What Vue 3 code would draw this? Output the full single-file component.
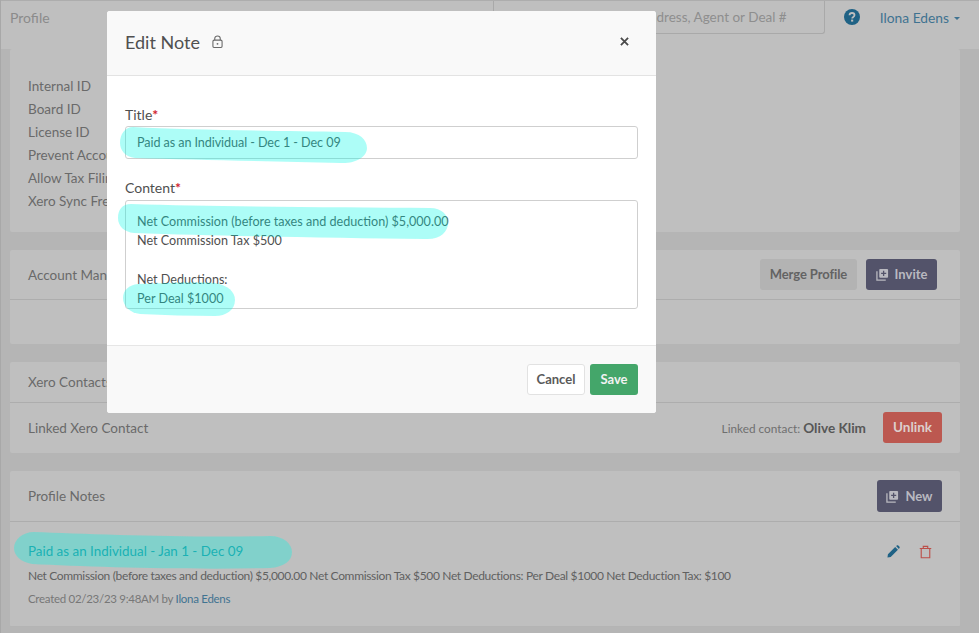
<script setup>
const rows = ['Internal ID', 'Board ID', 'License ID', 'Prevent Account', 'Allow Tax Filing', 'Xero Sync Free']
const contentLines = [
  'Net Commission (before taxes and deduction) $5,000.00',
  'Net Commission Tax $500',
  '\u00a0',
  'Net Deductions:',
  'Per Deal $1000'
]
const blobs = [
  'M133 127C190 130 280 131 345 132C360 132 367 140 367 148C367 157 355 164 340 163C270 161 190 160 135 158C125 157 120 150 120 143C120 134 125 127 133 127Z',
  'M131 204C220 207 340 207 430 208C442 208 448 215 448 223C448 232 440 240 425 239C330 238 220 236 134 233C124 232 118 226 118 218C118 210 122 204 131 204Z',
  'M138 284C165 283 195 282 215 283C228 285 235 292 235 300C235 310 226 316 215 316C190 316 165 315 140 314C130 313 123 306 123 298C123 290 129 285 138 284Z',
  'M34 532C90 534 190 538 270 536C284 536 292 544 292 552C292 561 284 567 270 568C190 570 90 567 32 564C21 562 14 556 14 548C14 540 22 532 34 532Z'
]
</script>

<template>
  <div class="page">
    <header class="topbar">
      <span class="crumb">Profile</span>
      <div class="search">Search by Name, Address, Agent or Deal #</div>
      <svg class="help" viewBox="0 0 16 16" width="16" height="16">
        <circle cx="8" cy="8" r="8" fill="#1f6285" />
        <path d="M5.5 6.2C5.6 4.8 6.6 4 8 4C9.5 4 10.5 4.9 10.5 6.1C10.5 7.1 10 7.6 9.2 8.1C8.5 8.5 8.2 8.8 8.2 9.6" fill="none" stroke="#bfbfbf" stroke-width="1.8" />
        <rect x="7.1" y="10.6" width="2.1" height="2" fill="#bfbfbf" />
      </svg>
      <span class="user">Ilona Edens<i class="caret"></i></span>
    </header>

    <main class="main">
      <section class="card first">
        <div v-for="r in rows" :key="r" class="row">{{ r }}</div>
      </section>

      <section class="card">
        <div class="card-head h50 pad23">
          <span>Account Manager</span>
          <div class="actions">
            <button class="btn merge">Merge Profile</button>
            <button class="btn dark">
              <svg viewBox="0 0 14 14" width="13" height="13" fill="none" stroke="currentColor" stroke-width="1.4">
                <path d="M1 3.5V13H10.5" />
                <rect x="3.5" y="1" width="9.5" height="9.5" rx="1" fill="currentColor" stroke="none" />
                <path d="M8.2 3V8.5M5.5 5.7H11" stroke="#53536a" />
              </svg>
              Invite
            </button>
          </div>
        </div>
        <div class="blank"></div>
      </section>

      <section class="card">
        <div class="card-head h41"><span>Xero Contacts</span></div>
        <div class="linked">
          <span>Linked Xero Contact</span>
          <div class="actions g17">
            <span class="contact">Linked contact: <b>Olive Klim</b></span>
            <button class="btn red">Unlink</button>
          </div>
        </div>
      </section>

      <section class="card">
        <div class="card-head h51">
          <span>Profile Notes</span>
          <button class="btn dark tall">
            <svg viewBox="0 0 14 14" width="13" height="13" fill="none" stroke="currentColor" stroke-width="1.4">
              <path d="M1 3.5V13H10.5" />
              <rect x="3.5" y="1" width="9.5" height="9.5" rx="1" fill="currentColor" stroke="none" />
              <path d="M8.2 3V8.5M5.5 5.7H11" stroke="#53536a" />
            </svg>
            New
          </button>
        </div>
        <div class="note">
          <div class="note-text">
            <a class="note-title">Paid as an Individual - Jan 1 - Dec 09</a>
            <p class="note-body">Net Commission (before taxes and deduction) $5,000.00 Net Commission Tax $500 Net Deductions: Per Deal $1000 Net Deduction Tax: $100</p>
            <p class="note-meta">Created 02/23/23 9:48AM by <a class="link">Ilona Edens</a></p>
          </div>
          <div class="note-icons">
            <svg viewBox="0 0 14 14" width="13" height="13" fill="#1f6285">
              <path d="M0.5 13.5L1 10L8.8 2.2L11.8 5.2L4 13ZM9.8 1.2L11 0.4C11.4 0.2 11.8 0.2 12.1 0.5L13.5 1.9C13.8 2.2 13.8 2.6 13.6 3L12.8 4.2Z" />
            </svg>
            <svg viewBox="0 0 14 14" width="13" height="14" fill="none" stroke="#bc4f49" stroke-width="1.2">
              <path d="M0.8 3.2H13.2M4.6 3V1H9.4V3M2.4 3.2V13.2H11.6V3.2" />
            </svg>
          </div>
        </div>
      </section>
    </main>

    <div class="modal">
      <div class="modal-head">
        <h2>Edit Note</h2>
        <svg class="lock" viewBox="0 0 12 14" width="11" height="13" fill="none" stroke="#6a6a6a" stroke-width="1.2">
          <rect x="1" y="5.5" width="10" height="8" rx="1.4" />
          <path d="M3 5.5V3.6C3 2 4.3 1 6 1C7.7 1 9 2 9 3.6V5.5" />
          <circle cx="6" cy="9.5" r="1" fill="#6a6a6a" stroke="none" />
        </svg>
        <svg class="close" viewBox="0 0 10 10" width="9" height="9" stroke="#4a4a4a" stroke-width="2">
          <path d="M1 1L9 9M9 1L1 9" />
        </svg>
      </div>
      <div class="modal-body">
        <label class="label">Title<em>*</em></label>
        <div class="input">Paid as an Individual - Dec 1 - Dec 09</div>
        <label class="label second">Content<em>*</em></label>
        <div class="area">
          <div v-for="(l, i) in contentLines" :key="i">{{ l }}</div>
        </div>
      </div>
      <div class="modal-foot">
        <button class="btn cancel">Cancel</button>
        <button class="btn save">Save</button>
      </div>
    </div>

    <svg class="marks" viewBox="0 0 979 633" width="979" height="633">
      <path v-for="(d, i) in blobs" :key="i" :d="d" fill="rgba(0,250,230,0.32)" />
    </svg>
  </div>
</template>

<style scoped>
.page {
  position: relative;
  width: 979px;
  height: 633px;
  box-sizing: border-box;
  overflow: hidden;
  background: #b5b5b5;
  border-left: 1px solid #a8a8a8;
  font-family: Lato, "Noto Sans", sans-serif;
  font-size: 13.5px;
  color: #5f5f5f;
}
.topbar {
  height: 49px;
  box-sizing: border-box;
  background: #bfbfbf;
  border-top: 1px solid #adadad;
  display: flex;
  align-items: flex-start;
  padding-right: 19px;
}
.crumb { margin: 8px 0 0 9px; color: #8b8b8b; line-height: 18px; font-size: 14px; }
.search {
  margin-left: auto;
  margin-right: 19px;
  width: 332px;
  height: 33px;
  box-sizing: border-box;
  border: 1px solid #a9a9a9;
  border-top: 0;
  border-radius: 0 0 3px 3px;
  line-height: 33px;
  color: #8e8e8e;
  text-align: right;
  padding-right: 37px;
  white-space: nowrap;
}
.help { margin: 8px 0 0 0; flex: none; }
.user { margin: 8px 0 0 20px; color: #3f7391; line-height: 18px; font-size: 13.8px; white-space: nowrap; }
.caret {
  display: inline-block;
  margin-left: 5px;
  vertical-align: 3px;
  border: 3px solid transparent;
  border-top: 3px solid #3f7391;
  border-bottom: 0;
}
.main {
  padding: 0 19px 0 9px;
  display: flex;
  flex-direction: column;
  gap: 18px;
}
.card { background: #bfbfbf; border-radius: 2px; }
.first { padding: 26px 18px 18px; height: 183px; box-sizing: border-box; }
.row { line-height: 23px; color: #6a6a6a; white-space: nowrap; }
.card-head {
  display: flex;
  align-items: center;
  justify-content: space-between;
  box-sizing: border-box;
  padding: 0 18px;
  border-bottom: 1px solid #adadad;
  color: #6a6a6a;
}
.h50 { height: 50px; }
.h41 { height: 41px; }
.h51 { height: 51px; }
.pad23 { padding-right: 23px; }
.blank { height: 44px; }
.actions { display: flex; align-items: center; gap: 9px; }
.g17 { gap: 17px; }
.btn {
  height: 31px;
  border: 0;
  border-radius: 3px;
  font: 700 13px/31px Lato, "Noto Sans", sans-serif;
  padding: 0;
  display: inline-flex;
  align-items: center;
  justify-content: center;
  gap: 6px;
  white-space: nowrap;
}
.merge { background: #b3b3b3; color: #636363; width: 97px; letter-spacing: -0.1px; }
.dark { background: #53536a; color: #b9b9c0; width: 71px; }
.tall { width: 65px; height: 32px; }
.red { background: #bc5850; color: #dccfcd; width: 59px; font-size: 13.5px; }
.linked {
  height: 50px;
  display: flex;
  align-items: center;
  justify-content: space-between;
  padding: 0 18px 1px;
  box-sizing: border-box;
  color: #6a6a6a;
}
.contact { font-size: 11.8px; color: #6f6f6f; }
.contact b { font-size: 13.6px; color: #575757; }
.note {
  height: 105px;
  box-sizing: border-box;
  border-bottom: 1px solid #b4b4b4;
  padding: 20px 28px 0 18px;
  display: flex;
  justify-content: space-between;
}
.note-title { display: block; line-height: 18px; color: #2a8f9c; font-size: 13.4px; }
.note-body { margin: 7px 0 0; font-size: 12px; letter-spacing: -0.34px; line-height: 18px; color: #616161; white-space: nowrap; }
.note-meta { margin: 5px 0 0; font-size: 11.5px; letter-spacing: -0.29px; line-height: 18px; color: #777; }
.link { color: #3f7391; }
.note-icons { display: flex; gap: 20px; align-items: flex-start; padding-top: 3px; }
.note-icons svg:first-child { margin-left: 1px; margin-right: -1px; }
.modal {
  position: absolute;
  left: 106px;
  top: 11px;
  width: 549px;
  height: 402px;
  display: flex;
  flex-direction: column;
  background: #fff;
  border-radius: 3px;
  overflow: hidden;
  color: #4f4f4f;
}
.modal-head {
  height: 65px;
  box-sizing: border-box;
  flex: none;
  display: flex;
  align-items: center;
  background: #f9f9f9;
  border-bottom: 1px solid #e3e3e3;
  padding: 0 27px 3px 18px;
}
.modal-head h2 { margin: 0; font-size: 18px; font-weight: 400; color: #505050; }
.lock { margin-left: 12px; }
.close { margin-left: auto; }
.modal-body {
  flex: 1;
  padding: 30px 18px 0;
  font-size: 14px;
}
.label { display: block; line-height: 18px; color: #4f4f4f; }
.label em { color: #d0222e; font-style: normal; font-weight: 700; }
.second { margin-top: 20px; }
.input, .area {
  box-sizing: border-box;
  background: #fff;
  border: 1px solid #cfcfcf;
  border-radius: 3px;
  padding: 0 11px;
  font-size: 12.6px;
  color: #4f4f4f;
}
.input { margin-top: 2px; height: 33px; line-height: 31px; letter-spacing: -0.08px; }
.area { margin-top: 3px; height: 109px; padding-top: 11px; line-height: 19.3px; white-space: nowrap; }
.modal-foot {
  height: 68px;
  box-sizing: border-box;
  flex: none;
  display: flex;
  align-items: center;
  justify-content: flex-end;
  gap: 5px;
  background: #f9f9f9;
  border-top: 1px solid #e6e6e6;
  padding: 0 18px;
}
.cancel { background: #fff; border: 1px solid #e2e2e2; color: #5a5a5a; width: 58px; }
.save { background: #44a66a; color: #f2f2f2; width: 48px; }
.marks { position: absolute; left: -1px; top: 0; pointer-events: none; }
</style>
